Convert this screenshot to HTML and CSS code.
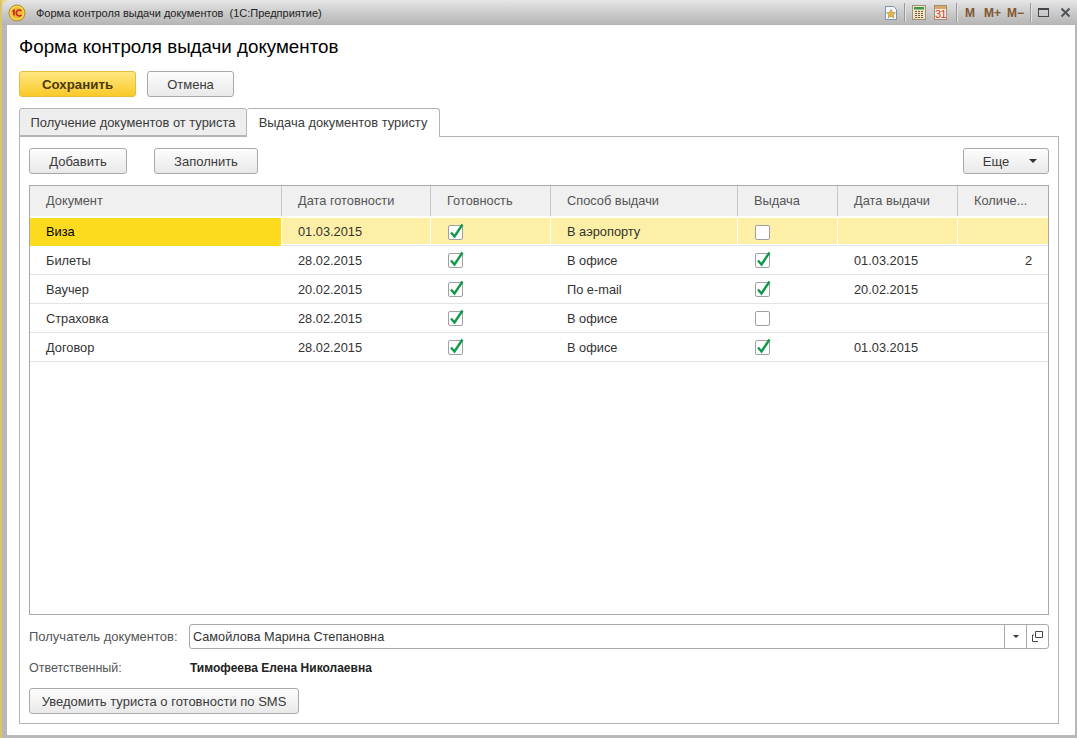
FILE: index.html
```html
<!DOCTYPE html>
<html lang="ru">
<head>
    <meta charset="UTF-8">
    <title>Форма контроля выдачи документов</title>
    <link rel="stylesheet" href="styles.css">
</head>
<body>
    <div class="window">
        <header class="titlebar">
            <svg class="logo" width="18" height="18" viewBox="0 0 18 18">
                <circle cx="9" cy="9" r="8" fill="#f6d24a" stroke="#b98a2a"/>
                <circle cx="9" cy="9" r="5.5" fill="#e8b93a"/>
                <path d="M4.5 7.5 L6 6.5 V11.5 M13.5 7 A3 3 0 1 0 13.5 11" fill="none" stroke="#d4201a" stroke-width="1.6"/>
            </svg>
            <span class="title">Форма контроля выдачи документов&nbsp; (1С:Предприятие)</span>
            <div class="tools">
                <svg class="tool" width="14" height="16" viewBox="0 0 14 16">
                    <path d="M1.5 1.5 H9.5 L12.5 4.5 V14.5 H1.5 Z" fill="#f4f7fb" stroke="#7d93ad"/>
                    <path d="M7 4.5 L8.4 7.4 L11.4 7.8 L9.2 9.8 L9.8 12.8 L7 11.3 L4.2 12.8 L4.8 9.8 L2.6 7.8 L5.6 7.4 Z" fill="#e4b64a" stroke="#a98432" stroke-width=".6"/>
                </svg>
                <i class="sep"></i>
                <svg class="tool" width="14" height="15" viewBox="0 0 14 15">
                    <rect x=".5" y=".5" width="13" height="14" fill="#f5e4c4" stroke="#9c9078"/>
                    <rect x="2" y="2" width="10" height="2.5" fill="#3d9a4b"/>
                    <path d="M3 6.5 H5 M6 6.5 H8 M9 6.5 H11 M3 8.5 H5 M6 8.5 H8 M9 8.5 H11 M3 10.5 H5 M6 10.5 H8 M9 10.5 H11 M3 12.5 H5 M6 12.5 H8 M9 12.5 H11" stroke="#6b5a48"/>
                </svg>
                <div class="cal">
                    <span class="cal-top"></span>
                    <span class="cal-num">31</span>
                </div>
                <i class="sep"></i>
                <span class="mem mem-m">M</span>
                <span class="mem mem-plus">M+</span>
                <span class="mem mem-minus">M−</span>
                <i class="sep"></i>
                <span class="win-max"></span>
                <svg class="win-close" width="11" height="11" viewBox="0 0 11 11">
                    <path d="M1.5 1.5 L9.5 9.5 M9.5 1.5 L1.5 9.5" stroke="#4f5458" stroke-width="2"/>
                </svg>
            </div>
        </header>

        <main class="form">
            <h1>Форма контроля выдачи документов</h1>
            <div class="commands">
                <button class="btn btn-save">Сохранить</button>
                <button class="btn btn-cancel">Отмена</button>
            </div>

            <div class="tabs">
                <div class="tab">Получение документов от туриста</div>
                <div class="tab tab-active">Выдача документов туристу</div>
            </div>

            <section class="panel">
                <div class="toolbar">
                    <button class="btn btn-add">Добавить</button>
                    <button class="btn btn-fill">Заполнить</button>
                    <button class="btn btn-more">Еще <span class="arrow"></span></button>
                </div>

                <div class="grid">
                    <div class="row head">
                        <div class="cell">Документ</div>
                        <div class="cell">Дата готовности</div>
                        <div class="cell">Готовность</div>
                        <div class="cell">Способ выдачи</div>
                        <div class="cell">Выдача</div>
                        <div class="cell">Дата выдачи</div>
                        <div class="cell">Количе...</div>
                    </div>
                    <div class="row current">
                        <div class="cell first">Виза</div>
                        <div class="cell">01.03.2015</div>
                        <div class="cell"><span class="check on"><svg width="16" height="16" viewBox="0 0 16 16"><path d="M3 9.5 L6.5 13.5 L14.5 1.5" fill="none" stroke="#0f9a4a" stroke-width="2.4"/></svg></span></div>
                        <div class="cell">В аэропорту</div>
                        <div class="cell"><span class="check"></span></div>
                        <div class="cell"></div>
                        <div class="cell"></div>
                    </div>
                    <div class="row item">
                        <div class="cell first">Билеты</div>
                        <div class="cell">28.02.2015</div>
                        <div class="cell"><span class="check on"><svg width="16" height="16" viewBox="0 0 16 16"><path d="M3 9.5 L6.5 13.5 L14.5 1.5" fill="none" stroke="#0f9a4a" stroke-width="2.4"/></svg></span></div>
                        <div class="cell">В офисе</div>
                        <div class="cell"><span class="check on"><svg width="16" height="16" viewBox="0 0 16 16"><path d="M3 9.5 L6.5 13.5 L14.5 1.5" fill="none" stroke="#0f9a4a" stroke-width="2.4"/></svg></span></div>
                        <div class="cell">01.03.2015</div>
                        <div class="cell num">2</div>
                    </div>
                    <div class="row item">
                        <div class="cell first">Ваучер</div>
                        <div class="cell">20.02.2015</div>
                        <div class="cell"><span class="check on"><svg width="16" height="16" viewBox="0 0 16 16"><path d="M3 9.5 L6.5 13.5 L14.5 1.5" fill="none" stroke="#0f9a4a" stroke-width="2.4"/></svg></span></div>
                        <div class="cell">По e-mail</div>
                        <div class="cell"><span class="check on"><svg width="16" height="16" viewBox="0 0 16 16"><path d="M3 9.5 L6.5 13.5 L14.5 1.5" fill="none" stroke="#0f9a4a" stroke-width="2.4"/></svg></span></div>
                        <div class="cell">20.02.2015</div>
                        <div class="cell"></div>
                    </div>
                    <div class="row item">
                        <div class="cell first">Страховка</div>
                        <div class="cell">28.02.2015</div>
                        <div class="cell"><span class="check on"><svg width="16" height="16" viewBox="0 0 16 16"><path d="M3 9.5 L6.5 13.5 L14.5 1.5" fill="none" stroke="#0f9a4a" stroke-width="2.4"/></svg></span></div>
                        <div class="cell">В офисе</div>
                        <div class="cell"><span class="check"></span></div>
                        <div class="cell"></div>
                        <div class="cell"></div>
                    </div>
                    <div class="row item">
                        <div class="cell first">Договор</div>
                        <div class="cell">28.02.2015</div>
                        <div class="cell"><span class="check on"><svg width="16" height="16" viewBox="0 0 16 16"><path d="M3 9.5 L6.5 13.5 L14.5 1.5" fill="none" stroke="#0f9a4a" stroke-width="2.4"/></svg></span></div>
                        <div class="cell">В офисе</div>
                        <div class="cell"><span class="check on"><svg width="16" height="16" viewBox="0 0 16 16"><path d="M3 9.5 L6.5 13.5 L14.5 1.5" fill="none" stroke="#0f9a4a" stroke-width="2.4"/></svg></span></div>
                        <div class="cell">01.03.2015</div>
                        <div class="cell"></div>
                    </div>
                </div>

                <div class="field">
                    <label class="field-label">Получатель документов:</label>
                    <div class="input">
                        <span class="input-text">Самойлова Марина Степановна</span>
                        <span class="input-btn"><span class="arrow arrow-small"></span></span>
                        <span class="input-btn">
                            <svg width="11" height="11" viewBox="0 0 11 11">
                                <path d="M3.5 .5 H10.5 V6.5 H3.5 Z M.5 4 V10.5 H6 M.5 4 H2" fill="none" stroke="#444"/>
                            </svg>
                        </span>
                    </div>
                </div>
                <div class="field field-info">
                    <span class="field-label">Ответственный:</span>
                    <strong class="field-value">Тимофеева Елена Николаевна</strong>
                </div>
                <button class="btn btn-sms">Уведомить туриста о готовности по SMS</button>
            </section>
        </main>
    </div>
</body>
</html>
```

FILE: styles.css
```css
* {
    box-sizing: border-box;
}

html, body {
    margin: 0;
    height: 100%;
}

body {
    font-family: "Liberation Sans", Arial, sans-serif;
    font-size: 13px;
    color: #3a3a3a;
    background: #b4b4b4;
    overflow: hidden;
}

.window {
    width: 1077px;
    height: 738px;
    padding: 0 2px 3px 5px;
    border-left: 2px solid #d8c56c;
    background: linear-gradient(#e8d98a 8px, #b8b8b8 8px);
    display: flex;
    flex-direction: column;
}

/* title bar */
.titlebar {
    height: 25px;
    flex: none;
    margin: 0 -2px 0 -5px;
    padding-left: 6px;
    display: flex;
    align-items: center;
    border-top-left-radius: 8px;
    background: linear-gradient(#e6e6e6, #c9c9c9 55%, #b5b5b5);
}

.logo {
    flex: none;
}

.title {
    margin-left: 10px;
    font-size: 11px;
    color: #222;
}

.tools {
    margin-left: auto;
    display: flex;
    align-items: center;
    height: 25px;
    padding-right: 6px;
}

.tool {
    display: block;
}

.sep {
    width: 1px;
    height: 19px;
    margin: 0 6px;
    background: #9a9a9a;
    border-right: 1px solid #e2e2e2;
    box-sizing: content-box;
}

.cal {
    width: 13px;
    height: 15px;
    margin-left: 8px;
    margin-right: 3px;
    background: #f8efe0;
    border: 1px solid #9c9078;
    overflow: hidden;
}

.cal-top {
    display: block;
    height: 3px;
    background: #d9a860;
}

.cal-num {
    display: block;
    font-size: 11px;
    line-height: 10px;
    text-align: center;
    letter-spacing: -.5px;
    color: #e0301e;
}

.mem {
    font-size: 12px;
    font-weight: bold;
    color: #80552f;
}

.mem-m {
    margin-left: 1px;
}

.mem-plus {
    margin-left: 9px;
}

.mem-minus {
    margin-left: 6px;
}

.win-max {
    width: 11px;
    height: 9px;
    border: 1px solid #41474c;
    border-top-width: 2px;
}

.win-close {
    margin-left: 11px;
    display: block;
}

/* form */
.form {
    flex: 1;
    background: #fff;
    padding: 0 12px;
    display: flex;
    flex-direction: column;
}

h1 {
    margin: 12px 0 0;
    font-size: 18.75px;
    line-height: 20px;
    font-weight: normal;
    color: #000;
}

.commands {
    display: flex;
    gap: 11px;
    margin-top: 14px;
}

.btn {
    height: 26px;
    padding: 0;
    font-family: inherit;
    font-size: 13px;
    color: #3a3a3a;
    text-align: center;
    border: 1px solid #a9a9a9;
    border-radius: 3px;
    background: linear-gradient(#fdfdfd, #e9e9e9);
}

.btn-save {
    width: 117px;
    font-size: 13.3px;
    font-weight: bold;
    color: #4a3a10;
    border-color: #e8bd3a;
    background: linear-gradient(#fee782, #fbc928);
}

.btn-cancel {
    width: 87px;
}

.tabs {
    display: flex;
    margin-top: 11px;
    height: 29px;
    position: relative;
    z-index: 1;
}

.tab {
    width: 228px;
    height: 28px;
    font-size: 12.9px;
    line-height: 27px;
    text-align: center;
    background: #eeeeee;
    border: 1px solid #b4b4b4;
    border-radius: 3px 3px 0 0;
}

.tab-active {
    width: 193px;
    height: 29px;
    background: #fff;
    border-left: 0;
    border-bottom: 0;
}

.panel {
    width: 1040px;
    height: 588px;
    margin-top: -1px;
    padding: 11px 9px 0 9px;
    border: 1px solid #b4b4b4;
}

.toolbar {
    display: flex;
}

.btn-add {
    width: 98px;
}

.btn-fill {
    width: 104px;
    margin-left: 27px;
}

.btn-more {
    width: 86px;
    margin-left: auto;
    position: relative;
    padding-right: 20px;
}

.arrow {
    position: absolute;
    right: 11px;
    top: 10px;
    width: 0;
    height: 0;
    border: 4px solid transparent;
    border-top: 4px solid #333;
    border-bottom: 0;
}

.arrow-small {
    position: static;
    border-width: 3px;
    border-bottom: 0;
    display: block;
}

/* table */
.grid {
    height: 430px;
    margin-top: 11px;
    border: 1px solid #a9a9a9;
}

.row {
    display: grid;
    grid-template-columns: 252px 149px 120px 187px 100px 120px 90px;
    height: 29px;
    border-bottom: 1px solid #e3e3e3;
}

.cell {
    padding-left: 16px;
    font-size: 12.8px;
    line-height: 28px;
    color: #333;
    white-space: nowrap;
    display: flex;
    align-items: center;
    border-right: 1px solid transparent;
}

.cell:last-child {
    border-right: 0;
}

.head {
    height: 32px;
    background: #f0f0f0;
    border-bottom: 2px solid #fff;
}

.head .cell {
    color: #555;
    border-right-color: #c8c8c8;
}

.head .cell:last-child {
    border-right: 0;
}

.current {
    height: 28px;
    background: #fdf0a6;
    background-clip: content-box;
    padding-bottom: 1px;
}

.current .cell {
    border-right-color: #fff;
}

.current .cell:last-child {
    border-right: 0;
}

.current .first {
    background: #fcdb1e;
    color: #000;
}

.item .cell {
    padding-top: 1px;
}

.num {
    justify-content: flex-end;
    padding-right: 16px;
}

.check {
    width: 15px;
    height: 15px;
    margin-left: 1px;
    display: block;
    position: relative;
    background: #fff;
    border: 1px solid #a0a0a0;
    border-radius: 2px;
}

.item .check {
    margin-top: -1px;
}

.check svg {
    position: absolute;
    left: -1px;
    top: -3px;
}

/* fields below the table */
.field {
    display: flex;
    align-items: center;
    margin-top: 9px;
}

.field-label {
    width: 160px;
    flex: none;
    color: #555;
}

.input {
    flex: 1;
    height: 25px;
    display: flex;
    border: 1px solid #a9a9a9;
    border-radius: 3px;
}

.input-text {
    flex: 1;
    padding-left: 3px;
    font-size: 12.7px;
    line-height: 25px;
    color: #333;
}

.input-btn {
    width: 22px;
    border-left: 1px solid #a9a9a9;
    display: flex;
    align-items: center;
    justify-content: center;
}

.field-info {
    margin-top: 11px;
    height: 15px;
}

.field-info .field-label {
    font-size: 12.5px;
}

.field-value {
    padding-left: 1px;
    font-size: 12px;
    color: #222;
}

.btn-sms {
    display: block;
    width: 270px;
    margin-top: 13px;
}
```
